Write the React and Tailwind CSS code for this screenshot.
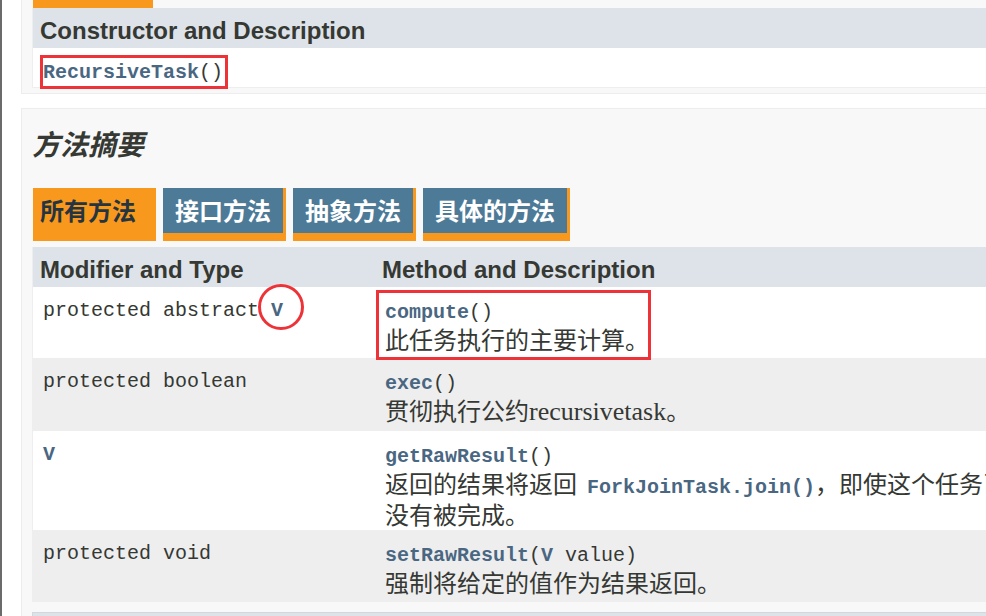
import React from 'react';

const MONO = "font-['Liberation_Mono','Courier_New',monospace] text-[20px]";
const CJK_BOLD = "font-['Noto_Sans_CJK_SC',sans-serif] font-bold";
const DESC = "font-['Liberation_Serif','Noto_Sans_CJK_SC',serif] text-[24px] leading-[28px] text-[#353833]";
const HEAD = "font-['Liberation_Sans',Arial,sans-serif] font-bold text-[24px] text-[#353833]";

const Link = ({ children }) => (
  <span className="font-bold text-[#4a6782]">{children}</span>
);

const tabs = [
  { label: '所有方法', active: true },
  { label: '接口方法' },
  { label: '抽象方法' },
  { label: '具体的方法' },
];

// rows of the method summary table
const methods = [
  {
    rowClass: 'h-[71px] bg-white',
    type: <>protected abstract <Link>V</Link></>,
    name: <><Link>compute</Link>()</>,
    desc: ['此任务执行的主要计算。'],
  },
  {
    rowClass: 'h-[73px] bg-[#eeeeef]',
    type: <>protected boolean</>,
    name: <><Link>exec</Link>()</>,
    desc: [
      <>贯彻执行公约<span className="text-[26px]">recursivetask</span>。</>,
    ],
  },
  {
    rowClass: 'h-[99px] bg-white',
    type: <Link>V</Link>,
    name: <><Link>getRawResult</Link>()</>,
    desc: [
      <>
        返回的结果将返回{' '}
        <span className={`${MONO} ml-[4px] font-bold text-[#4a6782]`}>ForkJoinTask.join()</span>
        ，即使这个任务已经异常完成，或者null如果这个任务
      </>,
      '没有被完成。',
    ],
  },
  {
    rowClass: 'h-[72px] bg-[#eeeeef]',
    type: <>protected void</>,
    name: <><Link>setRawResult</Link>(<Link>V</Link> value)</>,
    desc: ['强制将给定的值作为结果返回。'],
  },
];

const Tab = ({ label, active }) => {
  if (active) {
    return (
      <div className={`h-[53px] pl-[7px] pr-[20px] pb-[10px] bg-[#f8981d] text-[#253441] flex items-center text-[24px] leading-none whitespace-nowrap ${CJK_BOLD}`}>
        {label}
      </div>
    );
  }
  return (
    <div className={`h-[53px] px-[12px] pb-[2px] bg-[#4d7a97] text-white border-r-[3px] border-b-[8px] border-[#f8981d] flex items-center text-[24px] leading-none whitespace-nowrap ${CJK_BOLD}`}>
      {label}
    </div>
  );
};

const App = () => {
  return (
    <div className="relative w-[986px] h-[616px] overflow-hidden bg-white flex">
      {/* left page edge */}
      <div className="w-[2px] shrink-0 bg-[#6b6b6b]" />

      <div className="pl-[19px] shrink-0">
        <div className="w-[1300px]">
          {/* constructor summary (tail end) */}
          <div className="border-l border-b border-[#ededed] bg-[#f8f8f8] pl-[10px] pb-[5px]">
            <div className="ml-[1px] w-[120px] h-[8px] bg-[#f8981d]" />
            <div className="border-l border-b border-[#eeeeef]">
              <div className={`h-[40px] bg-[#dee3e9] pl-[7px] pt-[6px] flex items-center ${HEAD}`}>
                Constructor and Description
              </div>
              <div className="h-[39px] bg-white pl-[10px] pt-[11px]">
                <div className={`${MONO} leading-[28px] text-[#353833]`}>
                  <Link>RecursiveTask</Link>()
                </div>
              </div>
            </div>
          </div>

          {/* method summary */}
          <div className="mt-[14px] border-l border-t border-[#ededed] bg-[#f8f8f8] pl-[10px]">
            <div className="h-[79px] pt-[20px]">
              <h3 className={`text-[28px] leading-[28px] italic text-[#353833] ${CJK_BOLD}`}>
                方法摘要
              </h3>
            </div>

            <div className="ml-[1px] flex gap-[7px]">
              {tabs.map((t) => (
                <Tab key={t.label} label={t.label} active={t.active} />
              ))}
            </div>

            <div className="mt-[6px] border-l border-[#eeeeef]">
              <div className="h-[40px] bg-[#dee3e9] pt-[5px] flex items-center">
                <div className={`w-[341px] pl-[7px] ${HEAD}`}>Modifier and Type</div>
                <div className={`pl-[8px] ${HEAD}`}>Method and Description</div>
              </div>

              {methods.map((m, i) => (
                <div key={i} className={`flex ${m.rowClass}`}>
                  <div className={`w-[341px] shrink-0 pl-[10px] pt-[10px] ${MONO} leading-[28px] text-[#353833] whitespace-nowrap`}>
                    {m.type}
                  </div>
                  <div className="pl-[11px] pt-[12px]">
                    <div className={`${MONO} leading-[28px] text-[#353833] whitespace-nowrap`}>{m.name}</div>
                    {m.desc.map((line, j) => (
                      <div key={j} className={`${DESC} whitespace-nowrap`}>{line}</div>
                    ))}
                  </div>
                </div>
              ))}
            </div>

            <div className="mt-[10px] h-[40px] bg-[#dee3e9] border-t border-l border-[#d0d9e0]" />
          </div>
        </div>
      </div>

      {/* red annotation marks */}
      <div className="absolute left-[40px] top-[55px] w-[188px] h-[34px] border-[3px] border-[#ee3338]" />
      <div className="absolute left-[376px] top-[290px] w-[275px] h-[70px] border-[3px] border-[#ee3338]" />
      <div className="absolute left-[258px] top-[284px] w-[46px] h-[46px] rounded-full border-[3px] border-[#ee3338]" />
    </div>
  );
};

export default App;
